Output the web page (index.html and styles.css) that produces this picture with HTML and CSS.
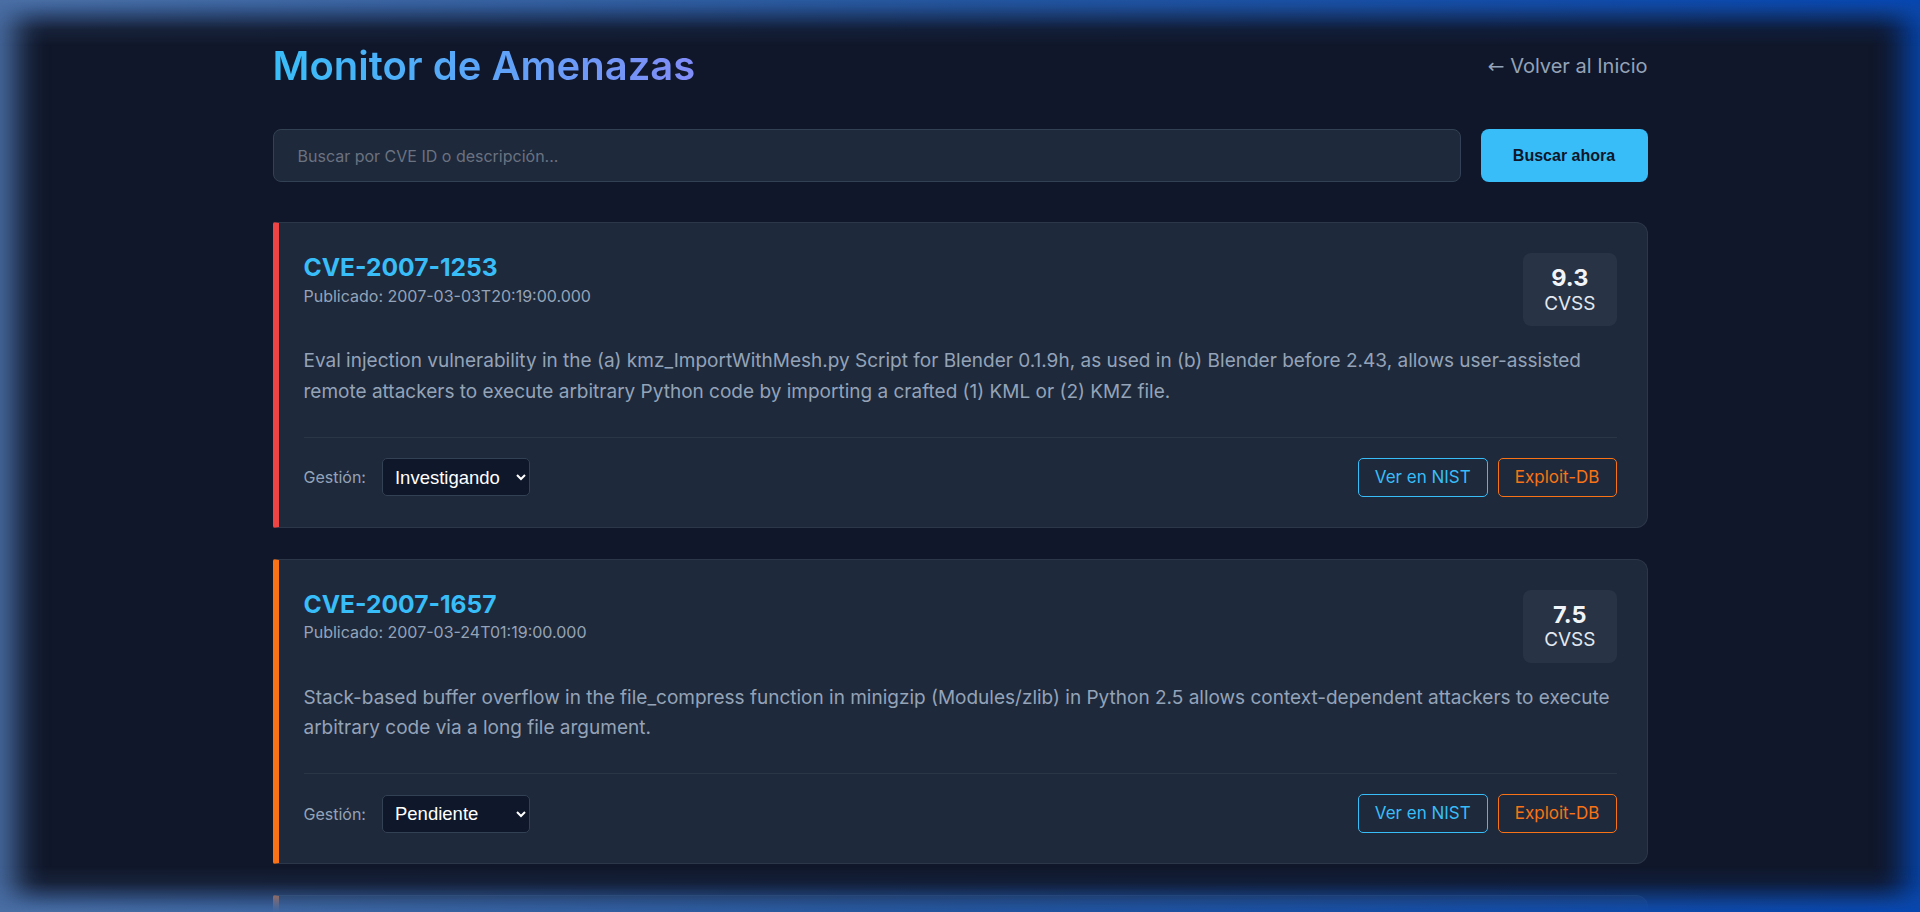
FILE: index.html
```html
<!DOCTYPE html>
<html lang="es">
<head>
<meta charset="utf-8">
<title>Monitor de Amenazas</title>
<link rel="stylesheet" href="styles.css">
</head>
<body>
<div class="page">
  <header class="top">
    <h1 class="brand">Monitor de Amenazas</h1>
    <a class="back" href="#"><span class="back-arrow">←</span> Volver al Inicio</a>
  </header>

  <form class="search">
    <input class="search-input" type="text" placeholder="Buscar por CVE ID o descripción...">
    <button class="search-btn" type="button">Buscar ahora</button>
  </form>

  <div class="list">
    <article class="card card-critical">
      <div class="card-head">
        <div class="card-id">
          <h2 class="cve">CVE-2007-1253</h2>
          <p class="date">Publicado: 2007-03-03T20:19:00.000</p>
        </div>
        <div class="score"><span class="score-val">9.3</span><span class="score-lbl">CVSS</span></div>
      </div>
      <p class="desc">Eval injection vulnerability in the (a) kmz_ImportWithMesh.py Script for Blender 0.1.9h, as used in (b) Blender before 2.43, allows user-assisted remote attackers to execute arbitrary Python code by importing a crafted (1) KML or (2) KMZ file.</p>
      <div class="card-foot">
        <label class="status"><span class="status-lbl">Gestión:</span>
          <select class="status-sel">
            <option>Pendiente</option>
            <option selected>Investigando</option>
            <option>Mitigado</option>
          </select>
        </label>
        <div class="links">
          <a class="btn btn-nist" href="#">Ver en NIST</a>
          <a class="btn btn-exploit" href="#">Exploit-DB</a>
        </div>
      </div>
    </article>

    <article class="card card-high">
      <div class="card-head">
        <div class="card-id">
          <h2 class="cve">CVE-2007-1657</h2>
          <p class="date">Publicado: 2007-03-24T01:19:00.000</p>
        </div>
        <div class="score"><span class="score-val">7.5</span><span class="score-lbl">CVSS</span></div>
      </div>
      <p class="desc">Stack-based buffer overflow in the file_compress function in minigzip (Modules/zlib) in Python 2.5 allows context-dependent attackers to execute arbitrary code via a long file argument.</p>
      <div class="card-foot">
        <label class="status"><span class="status-lbl">Gestión:</span>
          <select class="status-sel">
            <option selected>Pendiente</option>
            <option>Investigando</option>
            <option>Mitigado</option>
          </select>
        </label>
        <div class="links">
          <a class="btn btn-nist" href="#">Ver en NIST</a>
          <a class="btn btn-exploit" href="#">Exploit-DB</a>
        </div>
      </div>
    </article>

    <article class="card card-high">
      <div class="card-head">
        <div class="card-id">
          <h2 class="cve">CVE-2007-2052</h2>
          <p class="date">Publicado: 2007-04-16T22:19:00.000</p>
        </div>
        <div class="score"><span class="score-val">7.1</span><span class="score-lbl">CVSS</span></div>
      </div>
      <p class="desc">Off-by-one error in the PyLocale_strxfrm function in Modules/_localemodule.c for Python 2.4 and 2.5 causes an incorrect buffer size to be used for the strxfrm function.</p>
      <div class="card-foot">
        <label class="status"><span class="status-lbl">Gestión:</span>
          <select class="status-sel">
            <option selected>Pendiente</option>
            <option>Investigando</option>
            <option>Mitigado</option>
          </select>
        </label>
        <div class="links">
          <a class="btn btn-nist" href="#">Ver en NIST</a>
          <a class="btn btn-exploit" href="#">Exploit-DB</a>
        </div>
      </div>
    </article>
  </div>
</div>
<div class="glow"></div>
</body>
</html>
```

FILE: styles.css
```css
* { box-sizing: border-box; }

html, body {
  margin: 0;
  padding: 0;
  background: #10172a;
}

body {
  font-family: Inter, "Noto Sans", sans-serif;
  color: #e2e8f0;
}

.page {
  width: 1375px;
  margin: 0 auto;
  padding-top: 42px;
}

.top {
  display: flex;
  justify-content: space-between;
  align-items: center;
  margin-bottom: 39px;
}

.brand {
  margin: 0;
  font-size: 40px;
  font-weight: 600;
  line-height: 1.21;
  display: inline-block;
  background: linear-gradient(90deg, #38bdf8, #818cf8);
  -webkit-background-clip: text;
  background-clip: text;
  color: transparent;
}

.back {
  color: #94a3b8;
  font-size: 20px;
  text-decoration: none;
}

.back-arrow {
  font-family: "DejaVu Sans", sans-serif;
}

.search {
  display: flex;
  gap: 20px;
  margin: 0 0 40px;
}

.search-input {
  flex: 1;
  height: 53px;
  padding: 0 24px;
  font-family: Inter, sans-serif;
  font-size: 16px;
  color: #e2e8f0;
  background: #1e293b;
  border: 1px solid #334155;
  border-radius: 8px;
  outline: none;
}

.search-input::placeholder { color: #6b7280; }

.search-btn {
  width: 167px;
  height: 53px;
  border: 0;
  border-radius: 8px;
  background: #38bdf8;
  color: #0f172a;
  font-family: "Liberation Sans", Arial, sans-serif;
  font-weight: 700;
  font-size: 16px;
}

.list {
  display: flex;
  flex-direction: column;
  gap: 31px;
}

.card {
  background: #1e293b;
  border: 1px solid #2c3849;
  border-left: 6px solid #ef4444;
  border-radius: 2px 12px 12px 2px;
  padding: 30px 30px 30px 25px;
}

.card-high { border-left-color: #f97316; }

.card-head {
  display: flex;
  justify-content: space-between;
  align-items: flex-start;
  margin-bottom: 20px;
}

.cve {
  margin: 0;
  font-size: 24.6px;
  font-weight: 700;
  line-height: 1.21;
  color: #38bdf8;
}

.date {
  margin: 3px 0 0;
  font-size: 16px;
  color: #94a3b8;
}

.score {
  display: flex;
  flex-direction: column;
  align-items: center;
  padding: 11px 21px;
  background: #283345;
  border-radius: 8px;
}

.score-val {
  font-size: 23.5px;
  font-weight: 700;
  line-height: 1.2;
  color: #f1f5f9;
}

.score-lbl {
  font-size: 19px;
  line-height: 1.2;
  color: #e2e8f0;
}

.desc {
  margin: 0 0 30px;
  font-size: 19px;
  line-height: 1.6;
  color: #94a3b8;
}

.card-foot {
  display: flex;
  justify-content: space-between;
  align-items: center;
  border-top: 1px solid #2a3546;
  padding-top: 20px;
}

.status {
  display: flex;
  align-items: center;
  gap: 16px;
}

.status-lbl {
  font-size: 16px;
  color: #94a3b8;
}

.status-sel {
  width: 148px;
  height: 38px;
  padding: 0 8px 0 8px;
  background: #0f172a;
  color: #ffffff;
  border: 1px solid #334155;
  border-radius: 5px;
  font-family: "Liberation Sans", Arial, sans-serif;
  font-size: 18.5px;
}

.links {
  display: flex;
  gap: 10px;
}

.btn {
  display: inline-block;
  padding: 7px 16px;
  border: 1px solid #38bdf8;
  border-radius: 5px;
  font-size: 17px;
  line-height: 1.32;
  text-decoration: none;
  color: #38bdf8;
}

.btn-exploit {
  border-color: #f97316;
  color: #f97316;
}

.glow {
  position: fixed;
  inset: 0;
  pointer-events: none;
  box-shadow:
    inset 20px 0 30px -4px rgba(74, 111, 165, 0.97),
    inset -20px 0 30px -4px rgba(6, 70, 176, 0.97);
}

.glow::before,
.glow::after {
  content: "";
  position: absolute;
  left: 0;
  right: 0;
  height: 46px;
  background: linear-gradient(90deg, #4a6fa5 0%, #24559e 50%, #0646b0 100%);
}

.glow::before {
  top: 0;
  -webkit-mask-image: linear-gradient(to bottom, #000 0, rgba(0,0,0,.55) 14px, rgba(0,0,0,.12) 30px, transparent 46px);
  mask-image: linear-gradient(to bottom, #000 0, rgba(0,0,0,.55) 14px, rgba(0,0,0,.12) 30px, transparent 46px);
}

.glow::after {
  bottom: 0;
  -webkit-mask-image: linear-gradient(to top, #000 0, rgba(0,0,0,.55) 14px, rgba(0,0,0,.12) 30px, transparent 46px);
  mask-image: linear-gradient(to top, #000 0, rgba(0,0,0,.55) 14px, rgba(0,0,0,.12) 30px, transparent 46px);
}
```
